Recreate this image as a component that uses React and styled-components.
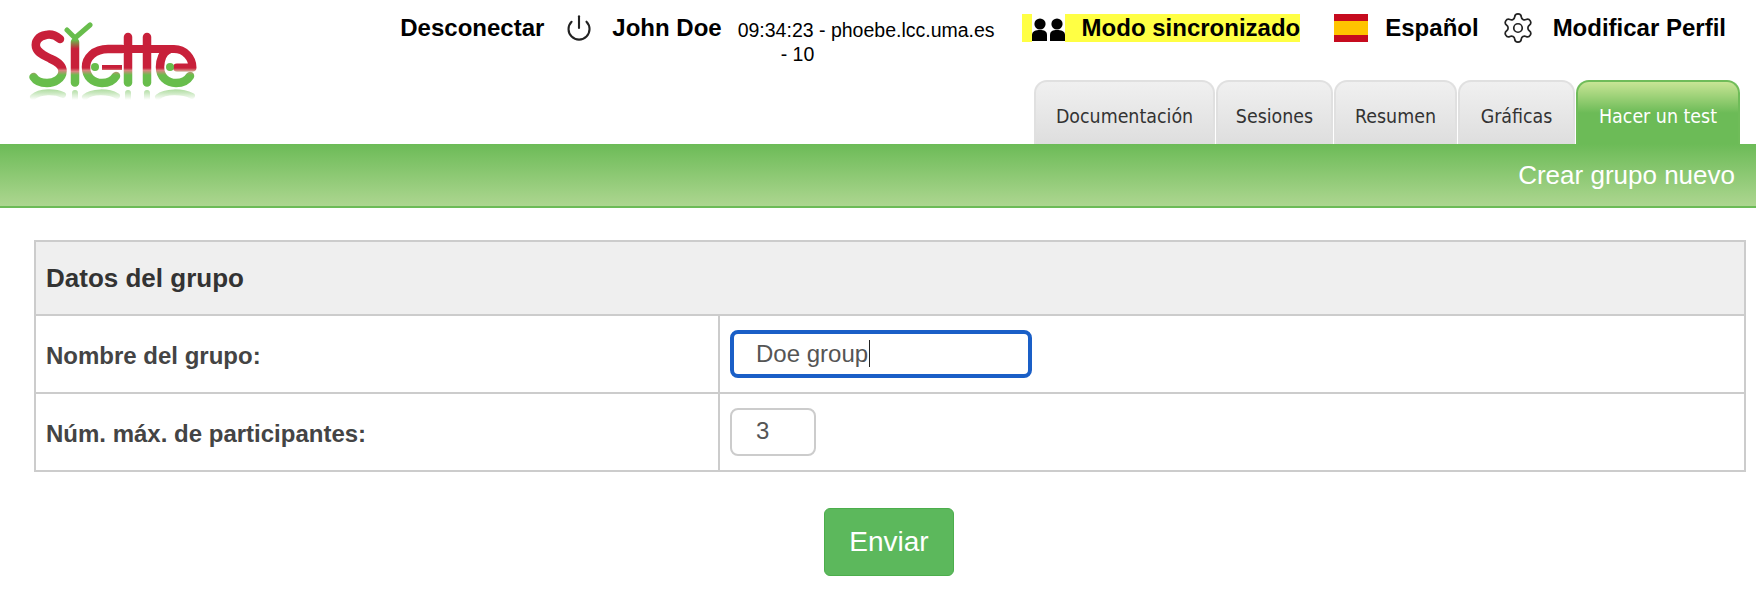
import React from "react";
import styled, { createGlobalStyle } from "styled-components";
import { Power, Settings } from "lucide-react";

const Global = createGlobalStyle`
  html, body { margin: 0; padding: 0; background: #fff; }
  body { font-family: "Liberation Sans", Arial, sans-serif; color: #333; }
`;

const Page = styled.div`
  width: 1756px;
  height: 602px;
  overflow: hidden;
`;
const Header = styled.header`
  display: flex;
  justify-content: space-between;
  height: 144px;
`;
const LogoWrap = styled.div`
  padding: 20px 0 0 25px;
`;
const HeaderRight = styled.div`
  display: flex;
  flex-direction: column;
  align-items: flex-end;
`;
const TopBar = styled.div`
  display: flex;
  align-items: flex-start;
  height: 80px;
  padding: 14px 30px 0 0;
  box-sizing: border-box;
`;
const TopLink = styled.a`
  display: block;
  font-size: 24px;
  font-weight: 700;
  line-height: 28px;
  color: #000;
  margin-left: ${(p) => p.$gap || 0}px;
  white-space: nowrap;
`;
const IconSlot = styled.span`
  display: flex;
  align-items: center;
  justify-content: center;
  height: 28px;
  margin-left: ${(p) => p.$gap || 0}px;
  color: #222;
`;
const ServerInfo = styled.div`
  margin: 4px 0 0 16px;
  font-size: 19.5px;
  line-height: 24px;
  color: #000;
  white-space: nowrap;
`;
const ServerTail = styled.div`
  padding-left: 43px;
`;
const SyncBadge = styled.div`
  display: flex;
  align-items: center;
  height: 28px;
  margin-left: 27px;
  padding-left: 10px;
  background: #ffff44;
  font-size: 24px;
  font-weight: 700;
  color: #000;
  white-space: nowrap;
`;
const PeopleBox = styled.span`
  display: flex;
  width: 33px;
  height: 28px;
  background: #fff;
  margin-right: 17px;
`;
const Flag = styled.span`
  display: block;
  width: 34px;
  height: 28px;
  margin-left: 34px;
  background: linear-gradient(#c60b1e 0 25%, #ffc400 25% 75%, #c60b1e 75%);
`;
const Tabs = styled.nav`
  display: flex;
  align-items: flex-end;
  height: 64px;
  padding-right: 16px;
  gap: 1px;
`;
const Tab = styled.a`
  box-sizing: border-box;
  display: flex;
  justify-content: center;
  padding-top: 23px;
  width: ${(p) => p.$w}px;
  height: 64px;
  border: 2px solid ${(p) => (p.$active ? "#6fbc59" : "#e0e0e0")};
  border-bottom: 0;
  border-radius: 13px 13px 0 0;
  background: ${(p) =>
    p.$active
      ? "linear-gradient(#c8e595 0%, #6cbb57 50%, #6cbb57 100%)"
      : "linear-gradient(#f0f0f0, #dedede)"};
  color: ${(p) => (p.$active ? "#fff" : "#333")};
  font-family: "DejaVu Sans", sans-serif;
  font-stretch: condensed;
  font-size: 19.4px;
  line-height: 24px;
  white-space: nowrap;
`;
const TitleBar = styled.div`
  box-sizing: border-box;
  height: 64px;
  padding: 15px 21px 0 0;
  text-align: right;
  background: linear-gradient(#6cbb57, #add690);
  border-bottom: 2px solid #6cbb57;
  color: #fff;
  font-size: 26px;
  line-height: 32px;
`;
const Main = styled.main`
  padding: 32px 10px 0 34px;
`;
const FormTable = styled.table`
  width: 100%;
  border-collapse: collapse;
  table-layout: fixed;
  border: 2px solid #ccc;
`;
const HeadCell = styled.th`
  height: 72px;
  padding: 0 10px;
  background: #efefef;
  border-bottom: 2px solid #ccc;
  text-align: left;
  font-size: 26px;
  color: #333;
`;
const LabelCell = styled.td`
  height: 78px;
  padding: 3px 10px 0;
  box-sizing: border-box;
  border: 2px solid #ccc;
  font-size: 24px;
  font-weight: 700;
  color: #444;
`;
const ValueCell = styled.td`
  padding: 0 10px;
  border: 2px solid #ccc;
`;
const Field = styled.div`
  box-sizing: border-box;
  width: ${(p) => p.$w}px;
  height: 48px;
  display: flex;
  align-items: center;
  padding: 0 0 ${(p) => (p.$focus ? 1 : 3)}px ${(p) => (p.$focus ? 22 : 24)}px;
  border: ${(p) => (p.$focus ? "4px solid #1a5fc7" : "2px solid #ccc")};
  border-radius: 8px;
  font-size: 24px;
  color: #555;
`;
const Caret = styled.span`
  display: block;
  width: 1px;
  height: 27px;
  margin-left: 1px;
  background: #222;
`;
const Actions = styled.div`
  display: flex;
  justify-content: center;
  padding: 36px 0 0 0;
`;
const Submit = styled.button`
  box-sizing: border-box;
  width: 130px;
  height: 68px;
  margin-left: -2px;
  border: 1px solid #4cae4c;
  border-radius: 6px;
  background: #5cb85c;
  color: #fff;
  font-family: "Liberation Sans", sans-serif;
  font-size: 28px;
`;

const Logo = () => (
  <svg width="175" height="84" viewBox="25 20 175 84" style={{ filter: "blur(0.5px)" }} role="img" aria-label="Siette">
    <defs>
      <linearGradient id="lg" gradientUnits="userSpaceOnUse" x1="0" y1="68" x2="0" y2="75">
        <stop offset="0" stopColor="#c8203a" />
        <stop offset="0.35" stopColor="#d8847f" />
        <stop offset="1" stopColor="#68bd4c" />
      </linearGradient>
      <linearGradient id="ig" gradientUnits="userSpaceOnUse" x1="0" y1="40" x2="0" y2="75">
        <stop offset="0" stopColor="#68bd4c" />
        <stop offset="0.25" stopColor="#c8203a" />
        <stop offset="0.8" stopColor="#c8203a" />
        <stop offset="0.9" stopColor="#d8847f" />
        <stop offset="1" stopColor="#68bd4c" />
      </linearGradient>
      <linearGradient id="rg" gradientUnits="userSpaceOnUse" x1="0" y1="90" x2="0" y2="100">
        <stop offset="0" stopColor="#68bd4c" stopOpacity="0.5" />
        <stop offset="1" stopColor="#68bd4c" stopOpacity="0" />
      </linearGradient>
    </defs>
    <g fill="none" stroke="url(#lg)" strokeWidth="8.5" strokeLinecap="round" strokeLinejoin="round">
      <path d="M60 39 C55 35 50 34 46 35 C38 36 35 42 36 47 C38 54 46 56 51 59 C58 62 62.5 66 62.5 71 C62.5 79 54 83 47 83 C41 83 36 81 33.5 77" />
      <path d="M75 42 V82.5" stroke="url(#ig)" />
      <path d="M122 49 H108 C94 49 86 58 86 67 C86 77 93 83 102 83 C108 83 113 81 116 76" />
      <path d="M102 67.5 H122" strokeWidth="5" strokeLinecap="butt" />
      <path d="M128 37 V82.5" />
      <path d="M147 37 V82.5" />
      <path d="M122 49 H174 C185 49 192.5 58 192.5 67.5 H177" strokeWidth="8" />
      <path d="M168 50 C163 52 160 60 160 67 C160 77 167 83 176 83 C182 83 187 81 190 76" />
    </g>
    <circle cx="95" cy="67" r="4" fill="#68bd4c" />
    <circle cx="170" cy="67" r="4" fill="#68bd4c" />
    <path d="M67 30 L75 38 L90 25" fill="none" stroke="#68bd4c" strokeWidth="5" strokeLinecap="round" strokeLinejoin="round" />
    <g fill="none" stroke="url(#rg)" strokeWidth="6" strokeLinecap="round">
      <path d="M33 97 C40 91 55 91 63 95" />
      <path d="M75 93 V99" />
      <path d="M85 97 C92 91 108 91 117 96" />
      <path d="M128 93 V99" />
      <path d="M147 93 V99" />
      <path d="M158 97 C165 91 182 91 192 96" />
    </g>
  </svg>
);

const People = () => (
  <svg width="33" height="28" viewBox="0 0 33 28" aria-hidden="true">
    <g fill="#000">
      <circle cx="8" cy="10" r="5.6" />
      <path d="M0 27 V21 C0 17 4 16 8 16 C12 16 15 17 15 21 V27 Z" />
      <circle cx="25" cy="10" r="5.6" />
      <path d="M18 27 V21 C18 17 21 16 25 16 C29 16 33 17 33 21 V27 Z" />
    </g>
  </svg>
);

export default function App() {
  return (
    <Page>
      <Global />
      <Header>
        <LogoWrap>
          <Logo />
        </LogoWrap>
        <HeaderRight>
          <TopBar>
            <TopLink>Desconectar</TopLink>
            <IconSlot $gap={21}>
              <Power size={28} strokeWidth={1.8} />
            </IconSlot>
            <TopLink $gap={19}>John Doe</TopLink>
            <ServerInfo>
              09:34:23 - phoebe.lcc.uma.es
              <ServerTail>- 10</ServerTail>
            </ServerInfo>
            <SyncBadge>
              <PeopleBox>
                <People />
              </PeopleBox>
              Modo sincronizado
            </SyncBadge>
            <Flag />
            <TopLink $gap={17}>Español</TopLink>
            <IconSlot $gap={22}>
              <Settings size={34} strokeWidth={1.2} />
            </IconSlot>
            <TopLink $gap={18}>Modificar Perfil</TopLink>
          </TopBar>
          <Tabs>
            <Tab $w={181}>Documentación</Tab>
            <Tab $w={117}>Sesiones</Tab>
            <Tab $w={123}>Resumen</Tab>
            <Tab $w={117}>Gráficas</Tab>
            <Tab $w={164} $active>Hacer un test</Tab>
          </Tabs>
        </HeaderRight>
      </Header>
      <TitleBar>Crear grupo nuevo</TitleBar>
      <Main>
        <FormTable>
          <colgroup>
            <col style={{ width: 684 }} />
            <col />
          </colgroup>
          <thead>
            <tr>
              <HeadCell colSpan={2}>Datos del grupo</HeadCell>
            </tr>
          </thead>
          <tbody>
            <tr>
              <LabelCell>Nombre del grupo:</LabelCell>
              <ValueCell>
                <Field $w={302} $focus>
                  Doe group
                  <Caret />
                </Field>
              </ValueCell>
            </tr>
            <tr>
              <LabelCell>Núm. máx. de participantes:</LabelCell>
              <ValueCell>
                <Field $w={86}>3</Field>
              </ValueCell>
            </tr>
          </tbody>
        </FormTable>
        <Actions>
          <Submit>Enviar</Submit>
        </Actions>
      </Main>
    </Page>
  );
}
